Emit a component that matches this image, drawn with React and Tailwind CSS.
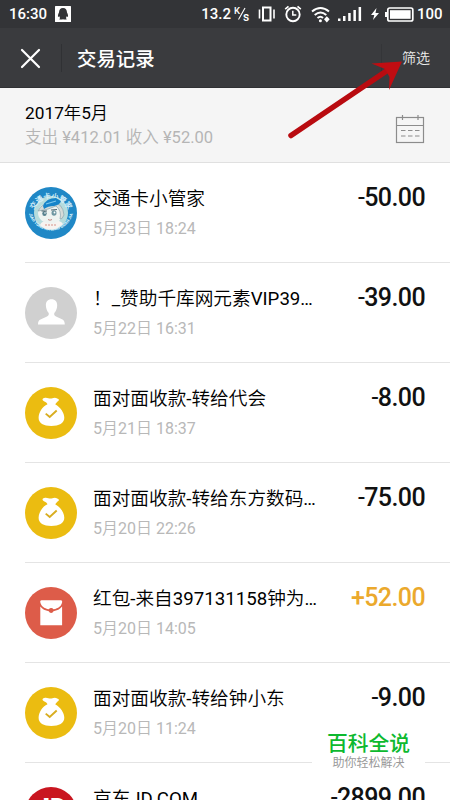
import React from 'react';

const records = [
  { icon: 'card', title: '交通卡小管家', time: '5月23日 18:24', amount: '50.00' },
  { icon: 'user', title: '！_赞助千库网元素VIP39…', time: '5月22日 16:31', amount: '39.00' },
  { icon: 'bag', title: '面对面收款-转给代会', time: '5月21日 18:37', amount: '8.00' },
  { icon: 'bag', title: '面对面收款-转给东方数码…', time: '5月20日 22:26', amount: '75.00' },
  { icon: 'packet', title: '红包-来自397131158钟为…', time: '5月20日 14:05', amount: '52.00', income: true },
  { icon: 'bag', title: '面对面收款-转给钟小东', time: '5月20日 11:24', amount: '9.00' },
  { icon: 'jd', title: '京东JD.COM', time: '', amount: '2899.00' },
];

function CardIcon() {
  return (
    <svg width="54" height="54" viewBox="0 0 54 54">
      <defs>
        <path id="arcTop" d="M8.7 29 A18.4 18.4 0 0 1 45.3 29" />
        <path id="arcBottom" d="M4.6 25 A22.6 22.6 0 0 0 49.4 25" />
      </defs>
      <circle cx="27" cy="27" r="26" fill="#2088c6" />
      <circle cx="27" cy="27" r="17" fill="#b5dcdd" />
      <text fontSize="7.2" fontWeight="700" fill="#d9f1fb" textAnchor="middle">
        <textPath href="#arcTop" startOffset="50%">交通卡小管家</textPath>
      </text>
      <text fontSize="4.2" fontWeight="900" fill="#d3effb" textAnchor="middle">
        <textPath href="#arcBottom" startOffset="50%">JIAO TONG KA XIAO GUAN JIA</textPath>
      </text>
      <path d="M16 39 Q18 34 27 34 Q37 34 39 38 Q33 43.500 27 43.500 Q20 43.500 16 39Z" fill="#f7f3f0" />
      <ellipse cx="26.500" cy="27" rx="12.500" ry="10.500" fill="#eef3f1" />
      <path d="M14 25 Q18 17 28 16 Q39 17 40 29 Q38 34 36 33 Q38 25 32 20 Q24 24 14 25Z" fill="#d5dbd8" stroke="#8aa5ae" strokeWidth=".7" />
      <path d="M19 20 Q22 12 32 12 L37 15 Q36 19 30 20 Q24 20 20 23Z" fill="#1684c9" />
      <path d="M22 18 L32 15" stroke="#7ec7ee" strokeWidth="1.200" />
      <ellipse cx="20.500" cy="27.500" rx="2.200" ry="2.600" fill="#56818f" />
      <ellipse cx="30" cy="27" rx="2.500" ry="2.800" fill="#6f97a2" />
      <path d="M17.500 25 H23 M27 24 L33 23.500" stroke="#3d5663" strokeWidth=".9" />
      <circle cx="21" cy="27" r=".8" fill="#fff" />
      <circle cx="30.500" cy="26.500" r=".9" fill="#fff" />
      <path d="M24 33.500 Q26 35 28 33.500" stroke="#b66a64" strokeWidth=".8" fill="none" />
      <path d="M21 39 H32" stroke="#d4938a" strokeWidth="1.200" strokeDasharray="2 1" />
    </svg>
  );
}

function RowIcon({ type }) {
  if (type === 'card') return <CardIcon />;
  if (type === 'user') {
    return (
      <svg width="54" height="54" viewBox="0 0 54 54">
        <circle cx="27" cy="27" r="26" fill="#d0d0d0" />
        <path d="M27.500 13.200 C23.800 13.200 21.700 15.600 21.900 19.500 C22 22.500 23.200 25.400 24.500 26.800 C25.300 28 24.700 29.800 23 30.600 L17 33.200 C14.700 34.200 13.900 35.600 14 38.500 H40.800 C40.800 35.600 40 34.200 38 33.200 L32 30.600 C30.200 29.800 29.700 28 30.500 26.800 C31.900 25.400 33.100 22.500 33.200 19.500 C33.300 15.600 31.200 13.200 27.500 13.200Z" fill="#fff" />
      </svg>
    );
  }
  if (type === 'bag') {
    return (
      <svg width="54" height="54" viewBox="0 0 54 54">
        <circle cx="27" cy="27" r="26" fill="#ebbc11" />
        <path d="M20.200 12 C23 11.100 25.200 13 27.500 12.500 C30 11.700 31.500 11.400 32.700 12.300 C35.700 13.600 35.500 14.200 33.300 15.800 L31.200 18.200 C36.500 21 40.300 27 40.300 31.800 C40.300 37.300 35 40 27.300 40 C19.600 40 14.600 37.300 14.600 31.800 C14.600 26.500 18.500 20.500 23.500 18.300 C22.700 15.500 19.500 15.800 18.600 14 C18.300 13 19 12.300 20.200 12Z" fill="#fff" />
        <path d="M21.700 27.600 L25.700 31 L32.700 24.500" fill="none" stroke="#d8ad20" strokeWidth="1.900" />
      </svg>
    );
  }
  if (type === 'packet') {
    return (
      <svg width="54" height="54" viewBox="0 0 54 54">
        <circle cx="27" cy="27" r="26" fill="#dd5c49" />
        <path d="M17.500 14.300 H36.800 C38 14.300 38.300 15 38.100 16.200 C37.500 20 34.500 22.300 29.400 23.300 A2.500 2.500 0 0 0 24.900 23.300 C20 22.300 17 20 16.300 16.200 C16.100 15 16.500 14.300 17.500 14.300Z" fill="#fff" />
        <path d="M16.300 20.600 C18.300 23.300 21.300 24.700 24.800 25.300 A2.500 2.500 0 0 0 29.500 25.300 C33 24.700 36 23.300 38.100 20.600 V39.200 H16.300Z" fill="#fff" />
      </svg>
    );
  }
  return (
    <svg width="54" height="54" viewBox="0 0 54 54">
      <circle cx="27" cy="27" r="26" fill="#c91620" />
      <text x="27" y="31" textAnchor="middle" fontSize="26" fontWeight="900" fill="#fff">JD</text>
    </svg>
  );
}

function StatusBar() {
  return (
    <div className="flex h-7 shrink-0 items-center bg-[#333437] pr-2 pl-[9px] text-[15px] font-medium text-white">
      <span className="w-[46px] leading-7">16:30</span>
      <svg width="16" height="16" viewBox="0 0 16 16">
        <rect width="16" height="16" rx=".5" fill="#fff" />
        <path d="M8 2 C5.300 2 4 3.800 4 6.500 C3 8.300 2.700 10 3.100 11 L4.300 10.300 L5 12 L4.300 13.500 H7.500 L8 13 L8.500 13.500 H11.700 L11 12 L11.700 10.300 L12.900 11 C13.300 10 13 8.300 12 6.500 C12 3.800 10.700 2 8 2Z" fill="#333437" />
      </svg>
      <span className="ml-auto leading-7">13.2</span>
      <svg className="ml-[3px]" width="18" height="18" viewBox="0 0 18 18" fill="#fff">
        <text x="0" y="8.500" fontSize="9.500">K</text>
        <path d="M4.500 14.500 L11 3" stroke="#fff" strokeWidth="1.100" />
        <text x="9" y="15.500" fontSize="12">s</text>
      </svg>
      <svg className="ml-1.5" width="18" height="16" viewBox="0 0 18 16" fill="none" stroke="#fff" strokeWidth="2">
        <rect x="5" y="1.500" width="7.500" height="13" />
        <path d="M1.500 3.500 V12.500 M16 3.500 V12.500" strokeWidth="1.600" />
      </svg>
      <svg className="ml-[8px]" width="18" height="18" viewBox="0 0 18 18" fill="none" stroke="#fff" strokeWidth="1.900">
        <circle cx="9" cy="9.500" r="6.700" />
        <path d="M8.800 5.800 V10 H12.300" strokeWidth="1.500" />
        <path d="M1.200 4.200 L4.500 1.400 M16.800 4.200 L13.500 1.400" strokeWidth="1.700" />
      </svg>
      <svg className="ml-[9px]" width="20" height="17" viewBox="0 0 20 17" fill="none" stroke="#fff" strokeWidth="2">
        <path d="M1 5.500 Q9.500 -1.500 18 5.500 M3.700 9 Q9.500 4 15.300 9 M6.500 12 Q9.500 9.500 12 12" />
        <circle cx="9.400" cy="14.800" r="1.500" fill="#fff" stroke="none" />
        <path d="M13 13.200 L15.800 10.200 L18.700 13.200 L15.800 16.400Z" fill="#fff" stroke="none" />
      </svg>
      <svg className="ml-[7px]" width="24" height="16" viewBox="0 0 24 16" fill="#fff">
        <path d="M0 12.500 H2.500 V15 H0Z M5 10 H7.500 V15 H5Z M10.200 7 H12.700 V15 H10.200Z M15.400 4 H17.900 V15 H15.400Z M20.600 1 H23.100 V15 H20.600Z" />
      </svg>
      <svg className="ml-[9px]" width="8" height="14" viewBox="0 0 8 14">
        <path d="M5.500 1 L0 8 H3.300 L2 13 L8 6 H4.500Z" fill="#fff" />
      </svg>
      <svg className="ml-[6px]" width="29" height="15" viewBox="0 0 29 15">
        <rect x="2.800" y="1" width="25" height="13" rx="1.800" fill="none" stroke="#fff" strokeWidth="1.700" />
        <rect x="5" y="3.200" width="20.600" height="8.600" fill="#fff" />
        <rect x="0" y="5" width="2.400" height="5" fill="#fff" />
      </svg>
      <span className="ml-[3px] w-[25px] leading-7">100</span>
    </div>
  );
}

function NavBar() {
  return (
    <div className="flex h-[60px] shrink-0 items-center border-b border-[#303134] bg-[#3a3b3e] pt-px pr-5 pl-5 text-white">
      <svg width="21" height="21" viewBox="0 0 21 21" stroke="#fff" strokeWidth="2.200" strokeLinecap="round">
        <path d="M2 2 L19 19 M19 2 L2 19" />
      </svg>
      <div className="ml-5 h-7 w-px bg-[#303134]" />
      <h1 className="ml-[15px] font-['Noto_Sans_CJK_SC',sans-serif] text-[19.400px] leading-7 font-medium">交易记录</h1>
      <div className="ml-auto h-7 w-px bg-[#343538]" />
      <span className="ml-5 text-sm text-[#ececec]">筛选</span>
    </div>
  );
}

function Summary() {
  return (
    <div className="flex h-[75px] shrink-0 items-center justify-between border-b border-[#e0e0e0] bg-[#f5f5f5] pr-[25px] pl-[25px]">
      <div>
        <div className="text-[17.300px] leading-6 text-black">2017年5月</div>
        <div className="mt-px text-[16.550px] leading-6 text-[#b5b5b5]">支出 ¥412.01 收入 ¥52.00</div>
      </div>
      <svg className="mt-2" width="30" height="30" viewBox="0 0 30 30" fill="none" stroke="#8c8c8c" strokeWidth="1.200">
        <rect x="1.500" y="3.500" width="27" height="25" />
        <path d="M1.500 11.500 H28.500 M7.500 1 V6 M23 1 V6" />
        <path d="M6 16.500 H10.500 M13 16.500 H17.500 M20 16.500 H24.500 M6 22 H10.500 M13 22 H17.500 M20 22 H24.500" />
      </svg>
    </div>
  );
}

function Record({ item }) {
  return (
    <div className="ml-[25px] flex h-[100px] shrink-0 border-b border-[#e4e4e4] pr-[25px]">
      <div className="-ml-px mt-[23px] w-[54px] shrink-0">
        <RowIcon type={item.icon} />
      </div>
      <div className="mt-[22px] ml-[15px]">
        <div className="text-[18.670px] leading-7 whitespace-nowrap text-black">{item.title}</div>
        <div className="mt-1 text-base leading-6 text-[#b8b8b8]">{item.time}</div>
      </div>
      <div className={item.income ? 'mt-[19px] ml-auto text-[25px] leading-8 font-medium tracking-[-0.6px] text-[#eba92c]' : 'mt-[19px] ml-auto text-[25px] leading-8 font-medium tracking-[-0.6px] text-[#111]'}>
        <span className={item.income ? 'font-medium' : 'font-normal'}>{item.income ? '+' : '-'}</span>
        {item.amount}
      </div>
    </div>
  );
}

export default function App() {
  return (
    <div className="relative flex h-[800px] w-[450px] flex-col overflow-hidden bg-white font-['Roboto','Noto_Sans_CJK_SC_DemiLight','Noto_Sans_CJK_SC_Light','Noto_Sans_CJK_SC',sans-serif]">
      <StatusBar />
      <NavBar />
      <Summary />
      {records.map((item) => (
        <Record key={item.title} item={item} />
      ))}

      {/* pointer to the filter button */}
      <svg className="absolute top-[50px] left-[280px]" width="130" height="95" viewBox="280 50 130 95">
        <path d="M291 135.500 L388 70" stroke="#b90b10" strokeWidth="5.500" strokeLinecap="round" />
        <path d="M402 61.500 L371.500 63.500 L385 69 L389.500 77 L389 90Z" fill="#c00d12" />
      </svg>

      <div className="absolute top-[727px] left-[312px] flex h-[50px] w-[113px] flex-col items-center bg-white font-['Noto_Sans_CJK_SC',sans-serif]">
        <div className="text-[20.800px] leading-[30px] font-medium text-[#0db92f]">百科全说</div>
        <div className="text-xs leading-[10px] text-[#999]">助你轻松解决</div>
      </div>
    </div>
  );
}
